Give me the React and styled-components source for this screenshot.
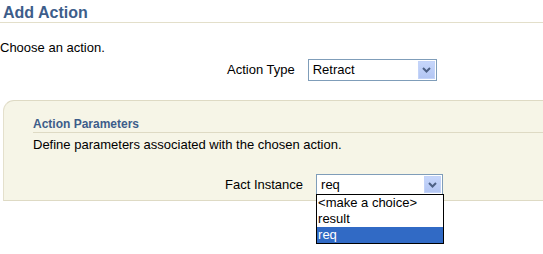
import React from "react";
import styled, { createGlobalStyle } from "styled-components";

const GlobalStyle = createGlobalStyle`
  body {
    margin: 0;
    background: #ffffff;
    font-family: "Liberation Sans", Arial, sans-serif;
    font-size: 13px;
    color: #000000;
  }
`;

const Page = styled.div`
  width: 543px;
  height: 254px;
  overflow: hidden;
  background: #ffffff;
`;

const Title = styled.h1`
  margin: 0;
  padding: 3px 0 0 3px;
  height: 19px;
  line-height: 19px;
  font-size: 16px;
  font-weight: bold;
  color: #3d5d8a;
  border-bottom: 1px solid #e3dfca;
`;

const Intro = styled.div`
  margin-top: 17px;
  line-height: 16px;
`;

const FieldRow = styled.div`
  display: flex;
  align-items: center;
  gap: ${(p) => p.gap}px;
  padding-left: ${(p) => p.indent}px;
  margin-top: ${(p) => p.top}px;
`;

const Label = styled.span`
  line-height: 16px;
`;

const SelectBox = styled.div`
  position: relative;
  box-sizing: border-box;
  width: ${(p) => p.width}px;
  height: ${(p) => p.height}px;
  border: 1px solid #7f9db9;
  background: #ffffff;
  display: flex;
  align-items: center;
`;

const SelectValue = styled.span`
  flex: 1;
  padding-left: 4px;
  line-height: 16px;
`;

const ArrowButton = styled.div`
  box-sizing: border-box;
  width: 17px;
  height: calc(100% - 2px);
  margin-right: 1px;
  background: linear-gradient(#c6d6fb, #b3c6f3);
  border: 1px solid #c3d3f8;
  display: flex;
  align-items: center;
  justify-content: center;
`;

const Panel = styled.div`
  margin: 19px 0 0 3px;
  box-sizing: border-box;
  height: 101px;
  padding-left: 29px;
  background: #f6f5e7;
  border-top: 1px solid #dedac4;
  border-left: 1px solid #e4e0cc;
  border-bottom: 1px solid #dedac4;
  border-top-left-radius: 11px;
`;

const SubTitle = styled.div`
  margin-top: 16px;
  height: 15px;
  line-height: 15px;
  font-size: 12px;
  font-weight: bold;
  color: #3d5d8a;
  border-bottom: 1px solid #dedac4;
`;

const Description = styled.div`
  margin-top: 4px;
  line-height: 16px;
`;

const OptionList = styled.div`
  position: absolute;
  left: -1px;
  top: 100%;
  z-index: 2;
  box-sizing: border-box;
  width: 128px;
  border: 1px solid #000000;
  background: #ffffff;
`;

const Option = styled.div`
  height: 16px;
  line-height: 16px;
  padding-left: 1px;
  background: ${(p) => (p.selected ? "#316ac5" : "#ffffff")};
  color: ${(p) => (p.selected ? "#ffffff" : "#000000")};
`;

const Chevron = () => (
  <svg width="9" height="6" viewBox="0 0 9 6">
    <path d="M1 1 L4.5 4.5 L8 1" fill="none" stroke="#4d6185" strokeWidth="2" />
  </svg>
);

const Select = ({ value, width, height, options }) => (
  <SelectBox width={width} height={height}>
    <SelectValue>{value}</SelectValue>
    <ArrowButton>
      <Chevron />
    </ArrowButton>
    {options && (
      <OptionList>
        {options.map((o) => (
          <Option key={o} selected={o === value}>
            {o}
          </Option>
        ))}
      </OptionList>
    )}
  </SelectBox>
);

export default function App() {
  return (
    <Page>
      <GlobalStyle />
      <Title>Add Action</Title>
      <Intro>Choose an action.</Intro>
      <FieldRow indent={227} gap={13} top={3}>
        <Label>Action Type</Label>
        <Select value="Retract" width={129} height={22} />
      </FieldRow>
      <Panel>
        <SubTitle>Action Parameters</SubTitle>
        <Description>Define parameters associated with the chosen action.</Description>
        <FieldRow indent={192} gap={13} top={21}>
          <Label>Fact Instance</Label>
          <Select
            value="req"
            width={127}
            height={21}
            options={["<make a choice>", "result", "req"]}
          />
        </FieldRow>
      </Panel>
    </Page>
  );
}
